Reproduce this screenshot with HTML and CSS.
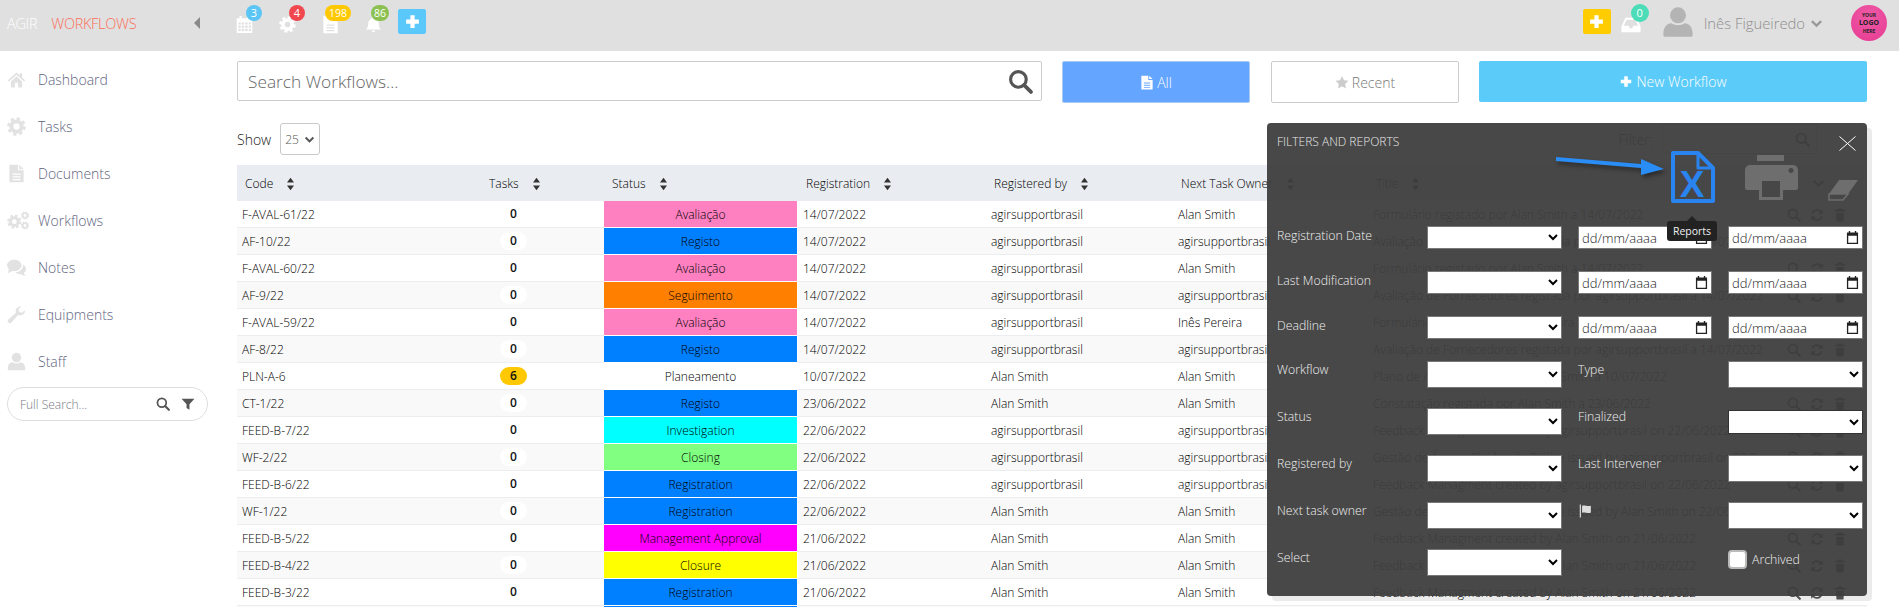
FILE: index.html
```html
<!DOCTYPE html>
<html lang="en">
<head>
<meta charset="utf-8">
<title>Workflows</title>
<link rel="stylesheet" href="styles.css">
</head>
<body>
<svg class="sprite" xmlns="http://www.w3.org/2000/svg">
  <symbol id="i-home" viewBox="0 0 24 24"><path d="M12 3 1 13l1.5 1.5L12 6l9.5 8.5L23 13l-4-3.6V4h-3v2.7z"/><path d="M5 14.5V22h5v-6h4v6h5v-7.5L12 8z"/></symbol>
  <symbol id="i-cog" viewBox="0 0 24 24"><circle cx="12" cy="12" r="6.5" fill="none" stroke="currentColor" stroke-width="5"/><circle cx="12" cy="12" r="10" fill="none" stroke="currentColor" stroke-width="3.5" stroke-dasharray="4.2 3.65"/></symbol>
  <symbol id="i-cogs" viewBox="0 0 30 24"><use href="#i-cog" x="0" y="4" width="19" height="19"/><use href="#i-cog" x="18" y="0" width="11" height="11"/><use href="#i-cog" x="18" y="13" width="11" height="11"/></symbol>
  <symbol id="i-file" viewBox="0 0 20 24"><path fill-rule="evenodd" d="M1 1h11v7h7v15H1zM5 12v1.5h10V12zM5 15.5V17h10v-1.500zM5 19v1.500h10V19z"/><path d="M13.500 1 19 6.500h-5.500z"/></symbol>
  <symbol id="i-comments" viewBox="0 0 26 24"><ellipse cx="10" cy="9" rx="10" ry="8"/><path d="M3 13 1 20l8-4z"/><path d="M22 8c2.500 1.500 4 3.500 4 6 0 2.500-1.500 4.500-3 5.500l2 4.500-7-3c-3 0-5-1-6.500-2.500 6 0 11-4 10.500-10.500z"/></symbol>
  <symbol id="i-wrench" viewBox="0 0 24 24"><path d="M23 6.500a6.500 6.500 0 0 1-9 6L5.500 22a2.600 2.600 0 0 1-3.800-3.600l9.600-8.500A6.500 6.500 0 0 1 18 1.500L14.500 5.500l1 3.200 3.300 1z"/></symbol>
  <symbol id="i-user" viewBox="0 0 24 24"><circle cx="12" cy="7" r="6"/><path d="M2 23c-1 0-1-1-1-2 0-4 2-8 6-8 1.500 1 3 1.500 5 1.500s3.500-.5 5-1.500c4 0 6 4 6 8 0 1 0 2-1 2z"/></symbol>
  <symbol id="i-search" viewBox="0 0 24 24"><circle cx="10" cy="10" r="7.500" fill="none" stroke="currentColor" stroke-width="3"/><path d="M15.500 15.500 22 22" fill="none" stroke="currentColor" stroke-width="3.600" stroke-linecap="round"/></symbol>
  <symbol id="i-filter" viewBox="0 0 24 24"><path d="M1 3h22l-8.500 9.500V22l-5-3v-6.500z"/></symbol>
  <symbol id="i-calendar" viewBox="0 0 24 24"><path fill-rule="evenodd" d="M5 0h3v3h8V0h3v3h4v21H1V3h4zM3.500 9v3h3V9zm4.500 0v3h3.500V9zm5 0v3h3.500V9zm5 0v3h3V9zM3.500 13.500v3h3v-3zm4.500 0v3h3.500v-3zm5 0v3h3.500v-3zm5 0v3h3v-3zM3.500 18v3h3v-3zm4.500 0v3h3.500v-3zm5 0v3h3.500v-3zm5 0v3h3v-3z"/></symbol>
  <symbol id="i-bell" viewBox="0 0 24 24"><path d="M12 1a2 2 0 0 1 2 2v.5c3.500 1 5.500 4 5.500 7.500 0 5 1.500 6 3 8H1.500c1.500-2 3-3 3-8 0-3.500 2-6.500 5.500-7.500V3a2 2 0 0 1 2-2z"/><path d="M9.500 20.500a2.500 2.500 0 0 0 5 0z"/></symbol>
  <symbol id="i-plus" viewBox="0 0 24 24"><path d="M9 3h6v6h6v6h-6v6H9v-6H3V9h6z"/></symbol>
  <symbol id="i-inbox" viewBox="0 0 24 20"><path fill-rule="evenodd" d="M5 1h14l5 11v7H0v-7zM6.500 3.500 3 11h6l1.500 3h3l1.500-3h6l-3.500-7.500z"/></symbol>
  <symbol id="i-sort" viewBox="0 0 12 20"><path d="M6 1l5 7H1zM6 19 1 12h10z"/></symbol>
  <symbol id="i-star" viewBox="0 0 24 24"><path d="M12 1l3.400 7.200 7.600 1-5.600 5.400 1.400 7.800L12 18.600l-6.800 3.800 1.400-7.800L1 9.200l7.600-1z"/></symbol>
  <symbol id="i-chevron" viewBox="0 0 24 24"><path d="M2 9l3-3 7 7 7-7 3 3-10 10z"/></symbol>
  <symbol id="i-caret" viewBox="0 0 8 14"><path d="M7 1v12L1 7z"/></symbol>
  <symbol id="i-flag" viewBox="0 0 24 24"><path d="M3 1h2v22H3z"/><path d="M7 3c5-2 8 2 15 0v12c-7 2-10-2-15 0z"/></symbol>
  <symbol id="i-refresh" viewBox="0 0 24 24"><path d="M4 10a8.500 8.500 0 0 1 15-3M20 14a8.500 8.500 0 0 1-15 3" fill="none" stroke="currentColor" stroke-width="3"/><path d="M22 2v8h-8zM2 22v-8h8z"/></symbol>
  <symbol id="i-trash" viewBox="0 0 24 24"><path d="M9 1h6l1 2h5v3H3V3h5zM5 8h14l-1 15H6z"/></symbol>
  <symbol id="i-date" viewBox="0 0 14 14"><path fill-rule="evenodd" d="M3 0h1.500v1.500h5V0H11v1.500h2V14H1V1.500h2zM2.400 5v7.600h9.200V5z"/></symbol>
</svg>

<header class="topbar">
  <div class="brand"><span class="brand-a">AGIR</span><span class="brand-b">WORKFLOWS</span></div>
  <svg class="caret"><use href="#i-caret"/></svg>
  <div class="tools">
    <span class="tool"><svg class="tool-icon"><use href="#i-calendar"/></svg><b class="badge b-blue">3</b></span>
    <span class="tool"><svg class="tool-icon"><use href="#i-cog"/></svg><b class="badge b-red">4</b></span>
    <span class="tool"><svg class="tool-icon"><use href="#i-file"/></svg><b class="badge b-yellow">198</b></span>
    <span class="tool"><svg class="tool-icon"><use href="#i-bell"/></svg><b class="badge b-green">86</b></span>
    <span class="square sq-blue"><svg><use href="#i-plus"/></svg></span>
  </div>
  <div class="account">
    <span class="square sq-yellow"><svg><use href="#i-plus"/></svg></span>
    <span class="inbox"><svg class="inbox-icon"><use href="#i-inbox"/></svg><b class="badge b-teal">0</b></span>
    <svg class="avatar"><use href="#i-user"/></svg>
    <span class="username">Inês Figueiredo</span>
    <svg class="user-chevron"><use href="#i-chevron"/></svg>
    <span class="logo">YOUR<em>LOGO</em>HERE</span>
  </div>
</header>

<div class="layout">
  <aside class="sidebar">
    <nav class="nav">
      <a class="nav-item"><svg class="nav-icon"><use href="#i-home"/></svg>Dashboard</a>
      <a class="nav-item"><svg class="nav-icon"><use href="#i-cog"/></svg>Tasks</a>
      <a class="nav-item"><svg class="nav-icon"><use href="#i-file"/></svg>Documents</a>
      <a class="nav-item"><svg class="nav-icon nav-icon-wide"><use href="#i-cogs"/></svg>Workflows</a>
      <a class="nav-item"><svg class="nav-icon"><use href="#i-comments"/></svg>Notes</a>
      <a class="nav-item"><svg class="nav-icon"><use href="#i-wrench"/></svg>Equipments</a>
      <a class="nav-item"><svg class="nav-icon"><use href="#i-user"/></svg>Staff</a>
    </nav>
    <div class="full-search"><span class="full-search-text">Full Search...</span><svg class="fs-icon"><use href="#i-search"/></svg><svg class="fs-icon"><use href="#i-filter"/></svg></div>
  </aside>

  <main class="main">
    <div class="toolbar">
      <div class="search"><span class="search-text">Search Workflows...</span><svg class="search-icon"><use href="#i-search"/></svg></div>
      <a class="btn btn-all"><svg class="btn-icon"><use href="#i-file"/></svg>All</a>
      <a class="btn btn-recent"><svg class="btn-icon"><use href="#i-star"/></svg>Recent</a>
      <a class="btn btn-new"><svg class="btn-icon"><use href="#i-plus"/></svg>New Workflow</a>
    </div>
    <div class="show">
      <span>Show</span><span class="show-select">25<svg class="show-chevron"><use href="#i-chevron"/></svg></span>
      <span class="filter-label">Filter:</span><span class="filter-box"><svg class="filter-icon"><use href="#i-search"/></svg></span>
    </div>

    <table class="grid">
      <colgroup><col class="c-code"><col class="c-tasks"><col class="c-status"><col class="c-date"><col class="c-reg"><col class="c-next"><col class="c-title"><col class="c-act"></colgroup>
      <thead>
        <tr>
          <th>Code<svg class="sort"><use href="#i-sort"/></svg></th>
          <th>Tasks<svg class="sort"><use href="#i-sort"/></svg></th>
          <th>Status<svg class="sort"><use href="#i-sort"/></svg></th>
          <th>Registration<svg class="sort"><use href="#i-sort"/></svg></th>
          <th>Registered by<svg class="sort"><use href="#i-sort"/></svg></th>
          <th>Next Task Owner<svg class="sort"><use href="#i-sort"/></svg></th>
          <th>Title<svg class="sort"><use href="#i-sort"/></svg></th>
          <th><svg class="th-chevron"><use href="#i-chevron"/></svg></th>
        </tr>
      </thead>
      <tbody>
        <tr><td>F-AVAL-61/22</td><td><b class="pill">0</b></td><td class="st st-pink">Avaliação</td><td>14/07/2022</td><td>agirsupportbrasil</td><td>Alan Smith</td><td class="title">Formulário registado por Alan Smith a 14/07/2022</td><td class="acts"><svg><use href="#i-search"/></svg><svg><use href="#i-refresh"/></svg><svg><use href="#i-trash"/></svg></td></tr>
        <tr><td>AF-10/22</td><td><b class="pill">0</b></td><td class="st st-blue">Registo</td><td>14/07/2022</td><td>agirsupportbrasil</td><td>agirsupportbrasil</td><td class="title">Avaliação de Fornecedores registada por agirsupportbrasil a 14/07/2022</td><td class="acts"><svg><use href="#i-search"/></svg><svg><use href="#i-refresh"/></svg><svg><use href="#i-trash"/></svg></td></tr>
        <tr><td>F-AVAL-60/22</td><td><b class="pill">0</b></td><td class="st st-pink">Avaliação</td><td>14/07/2022</td><td>agirsupportbrasil</td><td>Alan Smith</td><td class="title">Formulário registado por Alan Smith a 14/07/2022</td><td class="acts"><svg><use href="#i-search"/></svg><svg><use href="#i-refresh"/></svg><svg><use href="#i-trash"/></svg></td></tr>
        <tr><td>AF-9/22</td><td><b class="pill">0</b></td><td class="st st-orange">Seguimento</td><td>14/07/2022</td><td>agirsupportbrasil</td><td>agirsupportbrasil</td><td class="title">Avaliação de Fornecedores registada por agirsupportbrasil a 14/07/2022</td><td class="acts"><svg><use href="#i-search"/></svg><svg><use href="#i-refresh"/></svg><svg><use href="#i-trash"/></svg></td></tr>
        <tr><td>F-AVAL-59/22</td><td><b class="pill">0</b></td><td class="st st-pink">Avaliação</td><td>14/07/2022</td><td>agirsupportbrasil</td><td>Inês Pereira</td><td class="title">Formulário registado por Inês Pereira a 14/07/2022</td><td class="acts"><svg><use href="#i-search"/></svg><svg><use href="#i-refresh"/></svg><svg><use href="#i-trash"/></svg></td></tr>
        <tr><td>AF-8/22</td><td><b class="pill">0</b></td><td class="st st-blue">Registo</td><td>14/07/2022</td><td>agirsupportbrasil</td><td>agirsupportbrasil</td><td class="title">Avaliação de Fornecedores registada por agirsupportbrasil a 14/07/2022</td><td class="acts"><svg><use href="#i-search"/></svg><svg><use href="#i-refresh"/></svg><svg><use href="#i-trash"/></svg></td></tr>
        <tr><td>PLN-A-6</td><td><b class="pill pill-on">6</b></td><td class="st">Planeamento</td><td>10/07/2022</td><td>Alan Smith</td><td>Alan Smith</td><td class="title">Plano de Ações registado por Alan Smith a 10/07/2022</td><td class="acts"><svg><use href="#i-search"/></svg><svg><use href="#i-refresh"/></svg><svg><use href="#i-trash"/></svg></td></tr>
        <tr><td>CT-1/22</td><td><b class="pill">0</b></td><td class="st st-blue">Registo</td><td>23/06/2022</td><td>Alan Smith</td><td>Alan Smith</td><td class="title">Constatação registada por Alan Smith a 23/06/2022</td><td class="acts"><svg><use href="#i-search"/></svg><svg><use href="#i-refresh"/></svg><svg><use href="#i-trash"/></svg></td></tr>
        <tr><td>FEED-B-7/22</td><td><b class="pill">0</b></td><td class="st st-cyan">Investigation</td><td>22/06/2022</td><td>agirsupportbrasil</td><td>agirsupportbrasil</td><td class="title">Feedback Managment created by agirsupportbrasil on 22/06/2022</td><td class="acts"><svg><use href="#i-search"/></svg><svg><use href="#i-refresh"/></svg><svg><use href="#i-trash"/></svg></td></tr>
        <tr><td>WF-2/22</td><td><b class="pill">0</b></td><td class="st st-green">Closing</td><td>22/06/2022</td><td>agirsupportbrasil</td><td>agirsupportbrasil</td><td class="title">Gestão de Água e Fluidos de Diálise issued by agirsupportbrasil on 22/0...</td><td class="acts"><svg><use href="#i-search"/></svg><svg><use href="#i-refresh"/></svg><svg><use href="#i-trash"/></svg></td></tr>
        <tr><td>FEED-B-6/22</td><td><b class="pill">0</b></td><td class="st st-blue">Registration</td><td>22/06/2022</td><td>agirsupportbrasil</td><td>agirsupportbrasil</td><td class="title">Feedback Managment created by agirsupportbrasil on 22/06/2022</td><td class="acts"><svg><use href="#i-search"/></svg><svg><use href="#i-refresh"/></svg><svg><use href="#i-trash"/></svg></td></tr>
        <tr><td>WF-1/22</td><td><b class="pill">0</b></td><td class="st st-blue">Registration</td><td>22/06/2022</td><td>Alan Smith</td><td>Alan Smith</td><td class="title">Gestão de Água e Fluidos de Diálise issued by Alan Smith on 22/06/2022</td><td class="acts"><svg><use href="#i-search"/></svg><svg><use href="#i-refresh"/></svg><svg><use href="#i-trash"/></svg></td></tr>
        <tr><td>FEED-B-5/22</td><td><b class="pill">0</b></td><td class="st st-magenta">Management Approval</td><td>21/06/2022</td><td>Alan Smith</td><td>Alan Smith</td><td class="title">Feedback Managment created by Alan Smith on 21/06/2022</td><td class="acts"><svg><use href="#i-search"/></svg><svg><use href="#i-refresh"/></svg><svg><use href="#i-trash"/></svg></td></tr>
        <tr><td>FEED-B-4/22</td><td><b class="pill">0</b></td><td class="st st-yellow">Closure</td><td>21/06/2022</td><td>Alan Smith</td><td>Alan Smith</td><td class="title">Feedback Managment created by Alan Smith on 21/06/2022</td><td class="acts"><svg><use href="#i-search"/></svg><svg><use href="#i-refresh"/></svg><svg><use href="#i-trash"/></svg></td></tr>
        <tr><td>FEED-B-3/22</td><td><b class="pill">0</b></td><td class="st st-blue">Registration</td><td>21/06/2022</td><td>Alan Smith</td><td>Alan Smith</td><td class="title">Feedback Managment created by Alan Smith on 21/06/2022</td><td class="acts"><svg><use href="#i-search"/></svg><svg><use href="#i-refresh"/></svg><svg><use href="#i-trash"/></svg></td></tr>
        <tr><td>FEED-B-2/22</td><td><b class="pill">0</b></td><td class="st st-blue">Registration</td><td>21/06/2022</td><td>Alan Smith</td><td>Alan Smith</td><td class="title">Feedback Managment created by Alan Smith on 21/06/2022</td><td class="acts"><svg><use href="#i-search"/></svg><svg><use href="#i-refresh"/></svg><svg><use href="#i-trash"/></svg></td></tr>
      </tbody>
    </table>

    <section class="panel">
      <div class="panel-head">
        <span class="panel-title">FILTERS AND REPORTS</span>
        <div class="panel-tools">
          <svg class="excel" viewBox="0 0 45 52"><path d="M3 2h25l15 15v33H3z" fill="none" stroke="currentColor" stroke-width="4" stroke-linejoin="round"/><path d="M28 2v15h15" fill="none" stroke="currentColor" stroke-width="3" stroke-linejoin="round"/><text x="22" y="46" text-anchor="middle" class="excel-x">X</text></svg>
          <svg class="printer" viewBox="0 0 53 45"><path d="M12 0h27v6H12z"/><path fill-rule="evenodd" d="M5 10h43a5 5 0 0 1 5 5v18a2 2 0 0 1-2 2H38v10H14V35H2a2 2 0 0 1-2-2V15a5 5 0 0 1 5-5zM17 26v16h18V26zM46 13a2.500 2.500 0 1 0 .01 0z"/></svg>
          <svg class="eraser" viewBox="0 0 30 21"><path d="M11 0h19l-10 14H1z"/><path d="M1 14h19l-5 6H1z" fill="none" stroke="currentColor" stroke-width="1.500"/></svg>
        </div>
        <svg class="close" viewBox="0 0 17 15"><path d="M.5.500l16 14M16.500.500l-16 14" fill="none" stroke="#fff" stroke-width="1"/></svg>
        <svg class="arrow" viewBox="0 0 112 24"><path d="M0 2 85 9V4l23 10-23 6v-7L0 6z" fill="#2a8cf5"/></svg>
        <div class="tooltip">Reports</div>
      </div>
      <div class="form form-dates">
        <span class="lbl">Registration Date</span><select class="sel"></select><span class="date"><span>dd/mm/aaaa</span><svg class="date-icon"><use href="#i-date"/></svg></span><span class="date"><span>dd/mm/aaaa</span><svg class="date-icon"><use href="#i-date"/></svg></span>
        <span class="lbl">Last Modification</span><select class="sel"></select><span class="date"><span>dd/mm/aaaa</span><svg class="date-icon"><use href="#i-date"/></svg></span><span class="date"><span>dd/mm/aaaa</span><svg class="date-icon"><use href="#i-date"/></svg></span>
        <span class="lbl">Deadline</span><select class="sel"></select><span class="date"><span>dd/mm/aaaa</span><svg class="date-icon"><use href="#i-date"/></svg></span><span class="date"><span>dd/mm/aaaa</span><svg class="date-icon"><use href="#i-date"/></svg></span>
      </div>
      <div class="form form-sel">
        <span class="lbl">Workflow</span><select class="sel"></select><span class="lbl">Type</span><select class="sel"></select>
        <span class="lbl">Status</span><select class="sel"></select><span class="lbl">Finalized</span><select class="sel sel-short"></select>
        <span class="lbl">Registered by</span><select class="sel"></select><span class="lbl">Last Intervener</span><select class="sel"></select>
        <span class="lbl">Next task owner</span><select class="sel"></select><span class="lbl"><svg class="flag"><use href="#i-flag"/></svg></span><select class="sel"></select>
        <span class="lbl">Select</span><select class="sel"></select><span class="lbl"></span><label class="archived"><span class="check"></span>Archived</label>
      </div>
    </section>
  </main>
</div>
</body>
</html>
```

FILE: styles.css
```css
* { box-sizing: border-box; }
html, body { height: 100%; overflow: hidden; }
body { margin: 0; font-family: "Open Sans", "Noto Sans", sans-serif; font-size: 12px; color: #222; background: #fff; }
svg { fill: currentColor; display: block; }
.sprite { width: 0; height: 0; position: absolute; }

/* top bar */
.topbar { height: 51px; background: #e0e0e0; display: flex; align-items: center; padding: 0 12px 0 7px; }
.brand { width: 186px; display: flex; gap: 14px; font-size: 14.5px; font-weight: 300; letter-spacing: -.3px; padding-bottom: 5px; }
.brand-a { color: #fff; }
.brand-b { color: #fb6e58; }
.caret { width: 8px; height: 14px; color: #8a8a8a; margin: -5px 0 0 0; }
.tools { display: flex; align-items: flex-start; margin-left: 35px; align-self: flex-start; }
.tool { position: relative; width: 43px; height: 51px; color: #fff; }
.tool-icon { width: 17px; height: 19px; position: absolute; left: 0; top: 15px; }
.badge { position: absolute; font-size: 11px; font-weight: 400; color: #fff; border-radius: 9px; min-width: 16px; height: 16px; line-height: 16px; text-align: center; left: 10px; top: 5px; padding: 0 2px; }
.b-blue { background: #5bc5f5; }
.b-red { background: #f0484e; }
.b-yellow { background: #ffc800; left: 3px; padding: 0 4px; font-size: 10.5px; }
.b-green { background: #8cc152; left: 6px; padding: 0 3px; font-size: 10.5px; }
.b-teal { background: #4cdcb8; left: 10px; top: 4px; width: 18px; height: 18px; border-radius: 50%; line-height: 18px; }
.square { width: 28px; height: 25px; border-radius: 2px; display: flex; align-items: center; justify-content: center; color: #fff; }
.square svg { width: 17px; height: 17px; }
.sq-blue { background: #5ac8fa; margin: 9px 0 0 -10px; }
.sq-yellow { background: #ffcc00; margin-bottom: 8px; }
.account { margin-left: auto; display: flex; align-items: center; height: 100%; }
.inbox { position: relative; width: 28px; height: 51px; margin-left: 10px; color: #fff; }
.inbox-icon { width: 20px; height: 16px; position: absolute; left: 0; top: 17px; }
.avatar { width: 36px; height: 32px; margin: 0 0 7px 11px; color: #b4b4b4; }
.username { font-size: 14.800px; font-weight: 300; color: #8f8f8f; margin: 0 0 5px 8px; }
.user-chevron { width: 13px; height: 13px; color: #999; margin: 0 0 4px 5px; }
.logo { width: 36px; height: 36px; border-radius: 50%; margin: 0 0 6px 28px; background: radial-gradient(circle at 50% 30%, #ee5aa6, #e83a92); color: #222; font-size: 5px; font-weight: 700; display: flex; flex-direction: column; align-items: center; justify-content: center; line-height: 8px; }
.logo em { font-style: normal; font-size: 7px; }

/* layout */
.layout { display: flex; height: calc(100% - 51px); }
.sidebar { width: 237px; padding: 5px 0 0 7px; flex: none; }
.nav { display: flex; flex-direction: column; }
.nav-item { height: 47px; display: flex; align-items: center; font-size: 14px; font-weight: 300; color: #5f6580; }
.nav-icon { width: 19px; height: 19px; color: #e2e2e2; margin-right: 12px; flex: none; }
.nav-icon-wide { width: 23px; height: 23px; margin-right: 8px; }
.full-search { width: 201px; height: 34px; margin-top: 2px; border: 1px solid #dedede; border-radius: 17px; display: flex; align-items: center; padding: 0 12px 0 12px; color: #77777f; }
.full-search-text { flex: 1; font-size: 12px; font-weight: 300; }
.fs-icon { width: 14px; height: 14px; color: #555; margin-left: 11px; }

.main { flex: 1; position: relative; padding: 10px 32px 0 0; min-width: 0; }
.toolbar { display: flex; align-items: flex-start; }
.search { width: 805px; height: 40px; border: 1px solid #ccc; border-radius: 2px; display: flex; align-items: center; padding: 0 8px 0 10px; margin-right: 20px; }
.search-text { flex: 1; font-size: 17.300px; font-weight: 300; color: #666; }
.search-icon { width: 25px; height: 25px; color: #555; }
.btn { height: 42px; display: flex; align-items: center; justify-content: center; font-size: 14px; font-weight: 300; border-radius: 2px; }
.btn-icon { width: 14px; height: 15px; margin-right: 3px; }
.btn-all { width: 188px; background: #63a5ff; color: #fff; border: 1px solid #a9c9ee; margin-right: 21px; }
.btn-recent { width: 188px; background: #fff; color: #777; border: 1px solid #ccc; margin-right: 20px; }
.btn-recent .btn-icon { color: #ccc; }
.btn-new { flex: 1; background: #5bcbfa; color: #fff; height: 41px; }
.show { display: flex; align-items: center; gap: 9px; margin-top: 20px; height: 32px; font-size: 14px; font-weight: 300; }
.show-select { width: 40px; height: 32px; border: 1px solid #c9c9c9; border-radius: 3px; display: flex; align-items: center; justify-content: space-between; padding: 0 4px 0 4px; font-size: 12px; color: #555; }
.show-chevron { width: 11px; height: 11px; color: #555; }
.filter-label { margin-left: auto; }
.filter-box { width: 155px; height: 30px; border: 1px solid #ccc; margin-right: 50px; display: flex; align-items: center; justify-content: flex-end; padding-right: 6px; }
.filter-icon { width: 15px; height: 15px; color: #555; }

/* table */
.grid { width: 100%; table-layout: fixed; border-collapse: separate; border-spacing: 0; margin-top: 10px; }
.c-code { width: 244px; } .c-tasks { width: 123px; } .c-status { width: 194px; } .c-date { width: 188px; }
.c-reg { width: 187px; } .c-next { width: 195px; } .c-title { width: 400px; }
th { height: 36px; background: #e9ecf0; text-align: left; font-weight: 300; font-size: 12px; padding: 0 0 0 8px; white-space: nowrap; color: #000; }
th .sort { display: inline-block; width: 9px; height: 14px; color: #333; margin-left: 13px; vertical-align: -3px; }
.th-chevron { width: 13px; height: 13px; color: #555; margin-left: 36px; }
td { height: 27px; padding: 0 5px; border-bottom: 1px solid #ebedf1; white-space: nowrap; overflow: hidden; font-size: 12px; font-weight: 300; color: #000; }
tbody tr:nth-child(even) td { background: #f9f9f9; }
.pill { display: block; width: 27px; height: 18px; line-height: 18px; margin-left: 14px; border-radius: 9px; text-align: center; font-weight: 600; color: #111; }
tbody tr:nth-child(even) .pill { background: #fff; }
tbody tr .pill-on { background: #ffc800; }
tbody tr td.st { text-align: center; border-bottom-color: #fff; border-right: 1px solid #fff; background: #fff; }
tbody tr td.st-pink { background: #ff80c0; }
tbody tr td.st-blue { background: #0080ff; }
tbody tr td.st-orange { background: #ff8000; }
tbody tr td.st-cyan { background: #00ffff; }
tbody tr td.st-green { background: #80ff80; }
tbody tr td.st-magenta { background: #ff00ff; }
tbody tr td.st-yellow { background: #ffff00; }
.acts { padding: 0 0 0 19px; color: #555; }
.acts svg { display: inline-block; width: 14px; height: 14px; margin-right: 9px; vertical-align: middle; }

/* overlay panel */
.panel { position: absolute; left: 1030px; top: 72px; width: 600px; height: 473px; background: rgba(61, 61, 61, .945); border-radius: 4px; box-shadow: 5px 5px 0 rgba(0, 0, 0, .08); color: #e6e6e6; padding: 0 5px 0 10px; }
.panel-head { display: flex; height: 103px; position: relative; }
.panel-title { font-size: 12px; font-weight: 300; padding-top: 10px; color: #e8e8e8; }
.panel-tools { margin-left: auto; display: flex; align-items: flex-start; gap: 30px; padding: 28px 4px 0 0; }
.excel { width: 45px; height: 52px; color: #2a84f0; }
.excel-x { font: 700 37px "Liberation Sans", sans-serif; fill: #2a84f0; }
.printer { width: 53px; height: 45px; margin-top: 4px; color: #6e6e6e; }
.eraser { width: 30px; height: 21px; margin-top: 29px; color: #6e6e6e; }
.close { position: absolute; right: 6px; top: 13px; width: 17px; height: 15px; }
.arrow { position: absolute; left: 279px; top: 32px; width: 112px; height: 24px; filter: drop-shadow(2px 3px 2px rgba(0, 0, 0, .4)); }
.tooltip { position: absolute; left: 390px; top: 98px; width: 50px; height: 20px; background: #222; color: #f0f0f0; border-radius: 3px; font-size: 10.500px; line-height: 20px; text-align: center; z-index: 2; }
.tooltip::before { content: ""; position: absolute; left: 20px; top: -5px; border: 5px solid transparent; border-top: 0; border-bottom-color: #222; }
.form { display: grid; grid-template-columns: 134px 135px 134px 135px; column-gap: 16px; align-items: center; }
.form-dates { grid-auto-rows: 23px; row-gap: 22px; }
.form-sel { grid-auto-rows: 27px; row-gap: 20px; margin-top: 22px; }
.lbl { font-size: 12.300px; font-weight: 300; color: #f0f0f0; white-space: nowrap; padding-bottom: 5px; }
.form-sel .lbl { padding-bottom: 10px; }
.sel { width: 100%; height: 100%; background: #fff; border: 1px solid #777; border-radius: 0; font-size: 12px; margin: 0; }
.sel-short { height: 24px; border-color: #333; }
.date { height: 23px; background: #fff; border: 1px solid #777; color: #222; font-size: 13px; font-weight: 300; display: flex; align-items: center; justify-content: space-between; padding: 0 3px 0 3px; }
.date-icon { width: 13px; height: 13px; color: #222; }
.flag { width: 14px; height: 14px; color: #ddd; }
.archived { display: flex; align-items: center; gap: 5px; font-size: 12.300px; font-weight: 300; color: #f0f0f0; padding-bottom: 6px; }
.check { width: 19px; height: 19px; background: #fff; border: 2px solid #bbb; border-radius: 4px; flex: none; }
```
